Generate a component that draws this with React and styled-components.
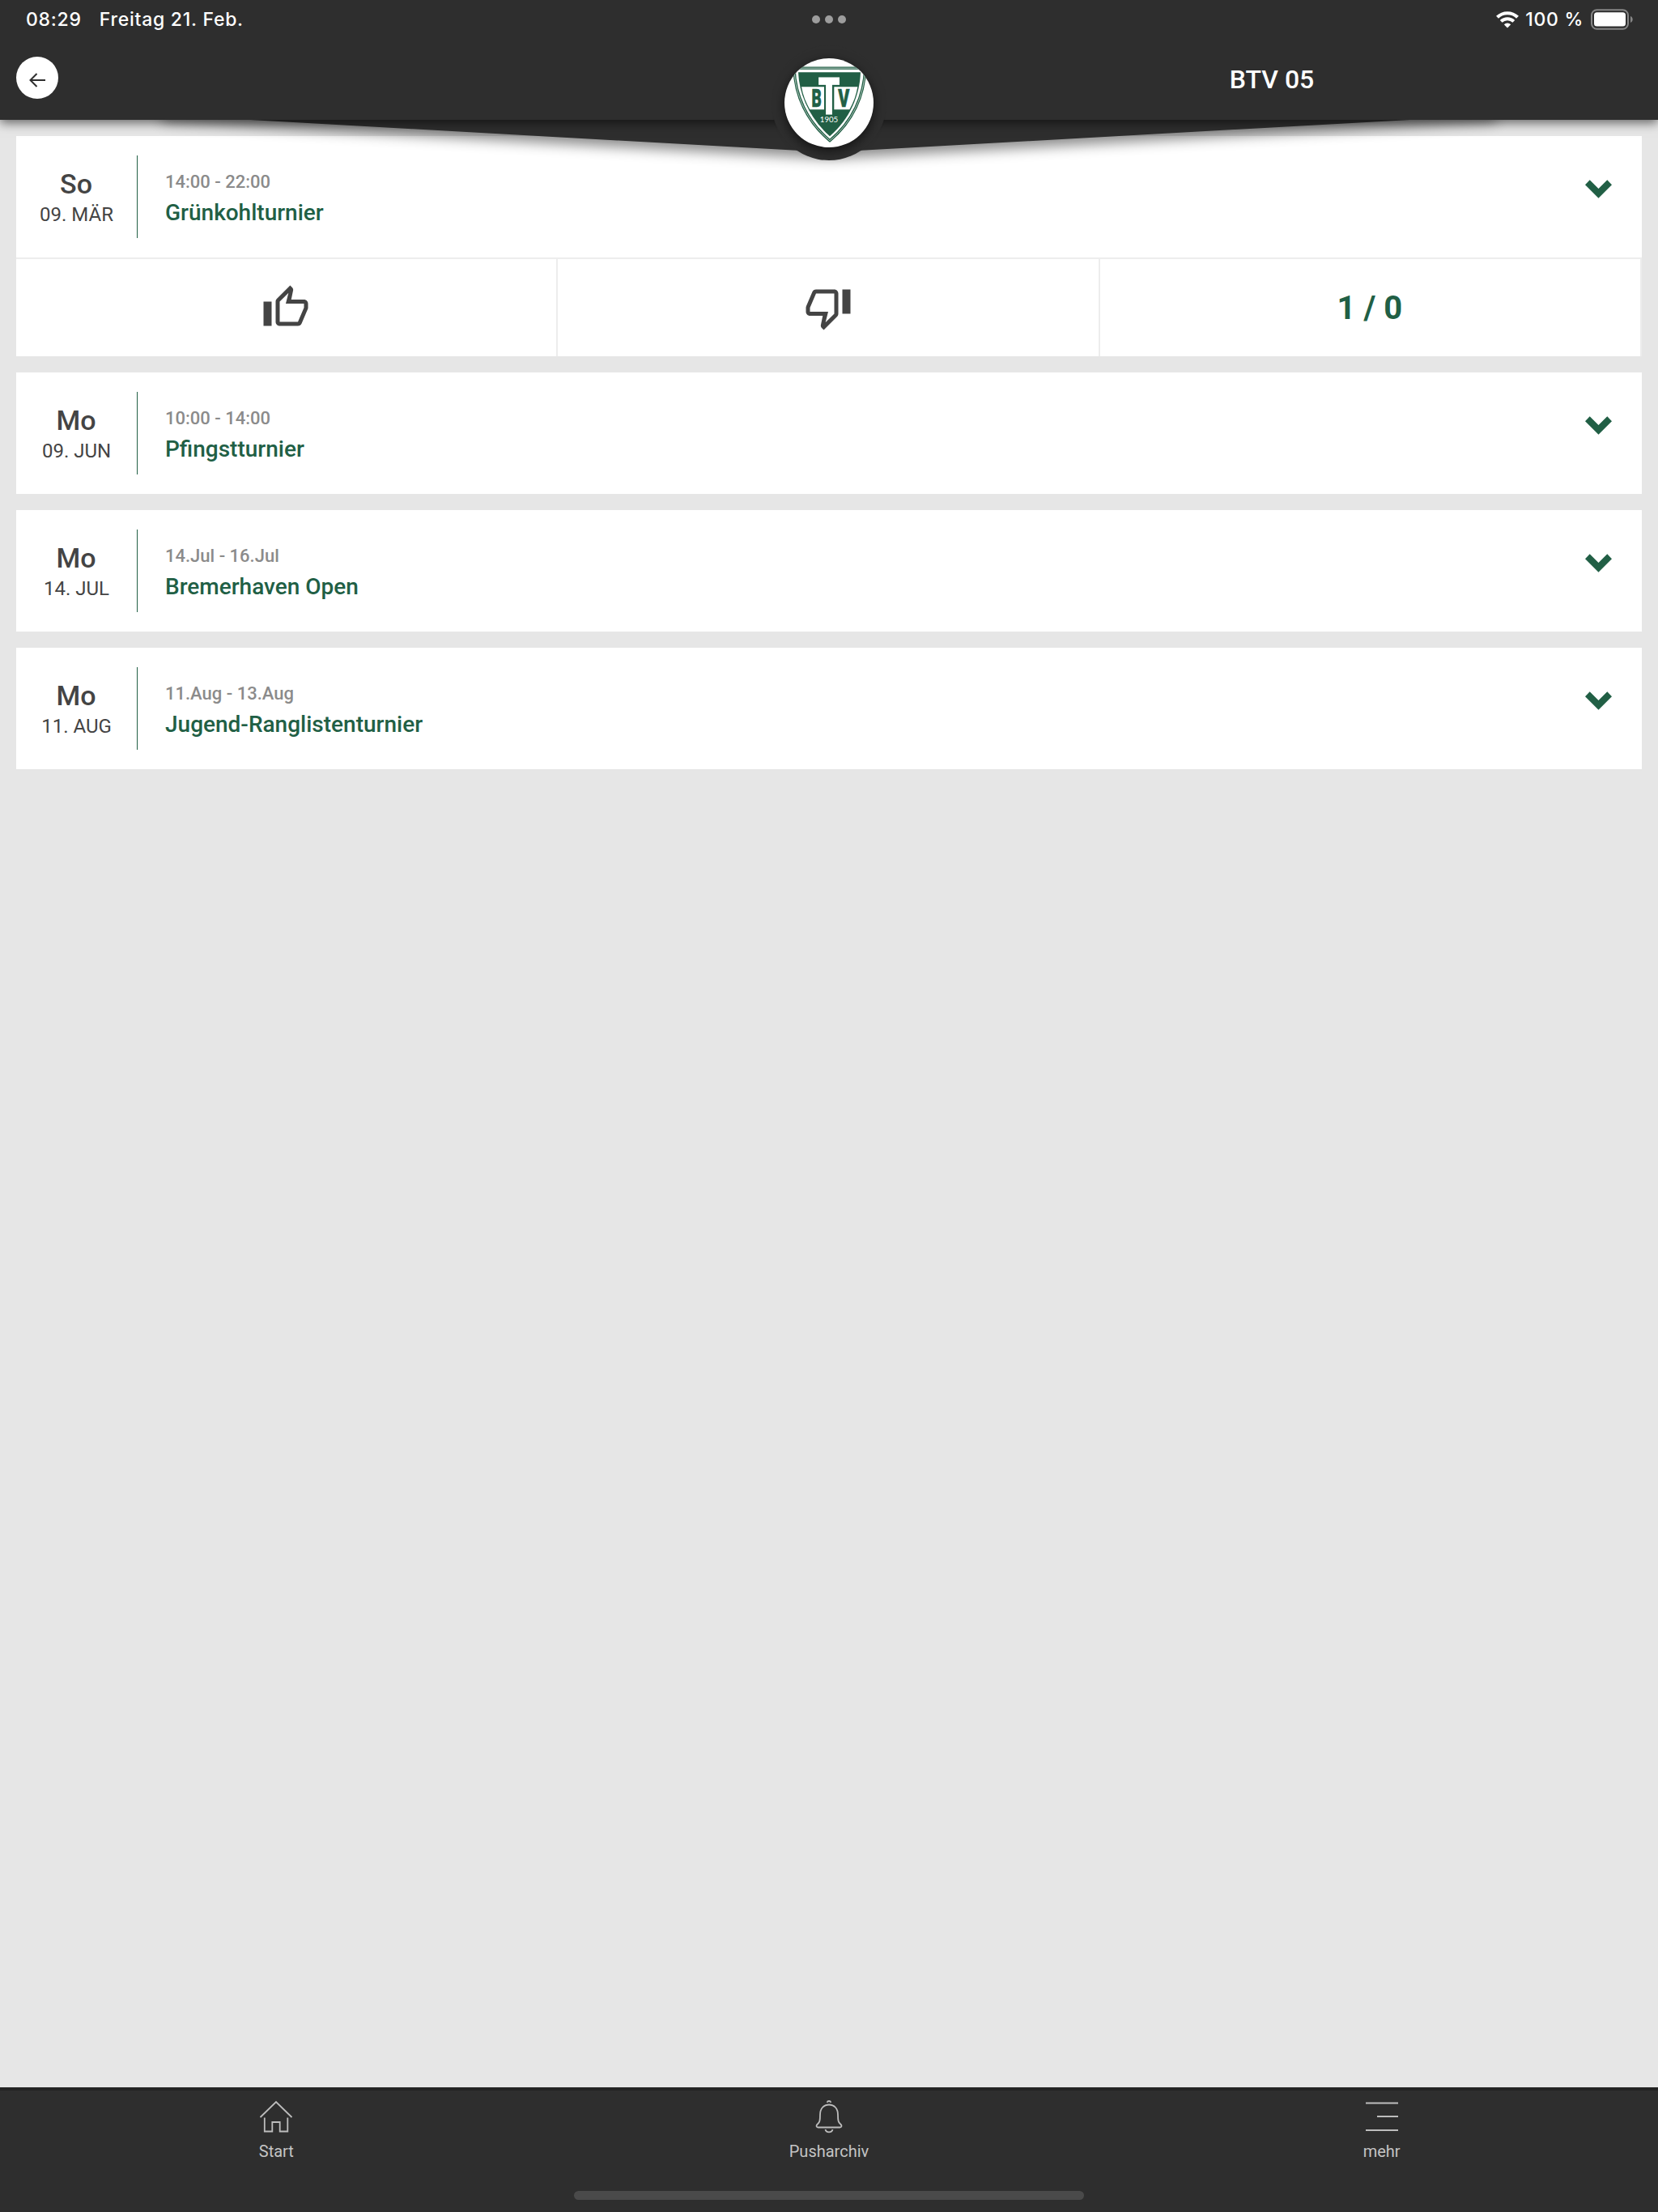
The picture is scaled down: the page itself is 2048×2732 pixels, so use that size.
import React from "react";
import styled, { createGlobalStyle } from "styled-components";
import { MdOutlineThumbUp, MdOutlineThumbDown } from "react-icons/md";

const GlobalStyle = createGlobalStyle`
  * {
    box-sizing: border-box;
  }
  body {
    margin: 0;
    background-color: #e6e6e6;
    font-family: Roboto, "Liberation Sans", sans-serif;
  }
`;

const Page = styled.div`
  width: 2048px;
  height: 2732px;
  display: flex;
  flex-direction: column;
  overflow: hidden;
  background-color: #e6e6e6;
`;

// header
const Header = styled.header`
  position: relative;
  z-index: 2;
  width: 100%;
  height: 148px;
  flex-shrink: 0;
`;

const HeaderBody = styled.div`
  position: relative;
  height: 148px;
  background-color: #2e2e2e;
  box-shadow: 0 4px 12px rgba(0, 0, 0, 0.55);
`;

const StatusBar = styled.div`
  height: 48px;
  padding: 0 30px 0 32px;
  display: grid;
  grid-template-columns: 1fr 42px 1fr;
  align-items: center;
  color: white;
  font-family: Inter, sans-serif;
  font-size: 23px;
  font-weight: 500;
  line-height: 48px;
`;

const StatusLeft = styled.div`
  display: flex;
  gap: 22px;
  letter-spacing: 0.75px;
`;

const StatusRight = styled.div`
  display: flex;
  justify-content: flex-end;
  align-items: center;
`;

const Percent = styled.span`
  margin: 0 9px 0 8px;
  letter-spacing: 0.7px;
`;

const Dots = styled.div`
  display: flex;
  gap: 6px;
  margin-left: -1px;
`;

const Dot = styled.span`
  width: 10px;
  height: 10px;
  border-radius: 50%;
  background-color: #9d9d9d;
`;

const TitleBar = styled.div`
  height: 100px;
  padding: 22px 20px 0;
  display: flex;
  justify-content: space-between;
`;

const BackButton = styled.button`
  width: 52px;
  height: 52px;
  padding: 5px 0 0;
  border: none;
  border-radius: 50%;
  background-color: white;
  display: flex;
  justify-content: center;
  align-items: center;
`;

const Title = styled.h1`
  width: 954px;
  margin: 0 -20px 0 0;
  color: white;
  font-size: 32px;
  font-weight: 500;
  line-height: 57px;
  text-align: center;
`;

const WedgeShadow = styled.div`
  position: absolute;
  top: 130px;
  left: 200px;
  filter: drop-shadow(0 8px 8px rgba(0, 0, 0, 0.45));
`;

const Wedge = styled.div`
  width: 1648px;
  height: 58px;
  background-color: #2e2e2e;
  clip-path: polygon(0 0, 100% 0, 100% 12px, 50% 58px, 0 12px);
`;

const Emblem = styled.div`
  position: absolute;
  top: 56px;
  left: 953px;
  width: 142px;
  height: 142px;
  border-radius: 50%;
  background-color: #2e2e2e;
  display: flex;
  justify-content: center;
  align-items: center;
`;

const EmblemDisc = styled.div`
  width: 110px;
  height: 110px;
  border-radius: 50%;
  overflow: hidden;
  background-color: white;
  box-shadow: 0 4px 14px rgba(0, 0, 0, 0.6);
`;

// events
const List = styled.main`
  flex: 1;
  padding: 20px;
  display: flex;
  flex-direction: column;
  gap: 20px;
`;

const Card = styled.article`
  background-color: white;
`;

const CardHead = styled.div`
  height: 150px;
  padding: 24px 37px 24px 0;
  display: flex;
`;

const DateBox = styled.div`
  width: 150px;
  border-right: 1px solid #215f45;
  color: #444;
  text-align: center;
`;

const Day = styled.div`
  margin-top: 15px;
  padding-right: 1px;
  font-size: 34px;
  font-weight: 500;
  line-height: 40px;
`;

const DateText = styled.div`
  font-size: 24px;
  line-height: 36px;
`;

const Info = styled.div`
  flex: 1;
  padding: 19px 0 0 34px;
  font-weight: 500;
`;

const Time = styled.div`
  color: #8b8b8b;
  font-size: 22px;
  line-height: 28px;
`;

const Name = styled.div`
  margin-top: 4px;
  color: #215f45;
  font-size: 28px;
  line-height: 40px;
`;

const Chevron = styled.svg`
  width: 33px;
  height: 23px;
  margin-top: 30px;
`;

const Votes = styled.div`
  height: 122px;
  display: grid;
  grid-template-columns: repeat(3, 1fr);
  border-top: 2px solid #ededed;
`;

const Vote = styled.div`
  display: flex;
  justify-content: center;
  align-items: center;
  border-right: 2px solid #ededed;
  color: #444;
  font-size: 60px;
  &:first-child {
    padding-right: 1px;
  }
`;

const Count = styled.span`
  padding-right: 1px;
  color: #215f45;
  font-size: 40px;
  font-weight: 700;
`;

// bottom navigation
const Nav = styled.nav`
  height: 154px;
  flex-shrink: 0;
  border-top: 4px solid #232323;
  background-color: #2e2e2e;
`;

const Tabs = styled.div`
  height: 124px;
  display: grid;
  grid-template-columns: repeat(3, 1fr);
`;

const Tab = styled.div`
  padding-top: 10px;
  display: flex;
  flex-direction: column;
  align-items: center;
  color: #c4c4c4;
  font-size: 20px;
  line-height: 24px;
`;

const TabIcon = styled.svg`
  width: 44px;
  height: 44px;
  margin-bottom: 9px;
  fill: none;
  stroke: #bdbdbd;
  stroke-width: 1.8;
`;

const HomeIndicator = styled.div`
  width: 630px;
  height: 11px;
  margin: 0 auto;
  border-radius: 6px;
  background-color: #4a4a4a;
`;

const events = [
  { day: "So", date: "09. MÄR", time: "14:00 - 22:00", name: "Grünkohlturnier", votes: "1 / 0" },
  { day: "Mo", date: "09. JUN", time: "10:00 - 14:00", name: "Pfingstturnier" },
  { day: "Mo", date: "14. JUL", time: "14.Jul - 16.Jul", name: "Bremerhaven Open" },
  { day: "Mo", date: "11. AUG", time: "11.Aug - 13.Aug", name: "Jugend-Ranglistenturnier" },
];

const Wifi = () => (
  <svg width="28" height="21" viewBox="0 0 28 21" fill="none" stroke="white">
    <path d="M1.5 7.3a18 18 0 0 1 25 0" strokeWidth="4.2" />
    <path d="M6.2 12.4a11.3 11.3 0 0 1 15.6 0" strokeWidth="4" />
    <path d="M14 20.5l-4.2-4.3a6 6 0 0 1 8.4 0z" fill="white" stroke="none" />
  </svg>
);

const Battery = () => (
  <svg width="53" height="26" viewBox="0 0 53 26">
    <rect x="1" y="1.2" width="45" height="23.6" rx="6.5" fill="none" stroke="#868686" strokeWidth="2" />
    <rect x="4" y="4.3" width="39" height="17.2" rx="3.5" fill="white" />
    <path d="M49 9v8c1.6-.6 2.7-2.2 2.7-4S50.6 9.6 49 9z" fill="#868686" />
  </svg>
);

const Shield = () => (
  <svg width="110" height="110" viewBox="15 12 330 330">
    <path d="M51 48.5H314C311 150 268 246 183 317C98 246 54 150 51 48.5Z" fill="white" stroke="#215f45" strokeWidth="10" />
    <path d="M51 48.5H314C311 150 268 246 183 317C98 246 54 150 51 48.5Z" fill="none" stroke="white" strokeWidth="2" />
    <path d="M66 64H297C294 150 258 235 183 301C109 235 70 150 66 64Z" fill="#215f45" />
    <path d="M78 118H162V202H109C94 176 83 147 78 118Z" fill="white" />
    <path d="M199 118H286C281 147 271 176 256 202H199Z" fill="white" />
    <g fontFamily="Roboto, sans-serif" fontWeight="900" textAnchor="middle">
      <text fontSize="187" fill="white" stroke="white" strokeWidth="3" transform="translate(180.5 218.5) scale(0.68 1)">
        T
      </text>
      <text fontSize="95" fill="#215f45" stroke="#215f45" strokeWidth="2" transform="translate(134 193) scale(0.6 1)">
        B
      </text>
      <text fontSize="95" fill="#215f45" stroke="#215f45" strokeWidth="2" transform="translate(235 193) scale(0.67 1)">
        V
      </text>
    </g>
    <text x="180" y="248" fontFamily="Lato, sans-serif" fontSize="29" textAnchor="middle" fill="white">
      1905
    </text>
  </svg>
);

const EventCard = ({ event }) => (
  <Card>
    <CardHead>
      <DateBox>
        <Day>{event.day}</Day>
        <DateText>{event.date}</DateText>
      </DateBox>
      <Info>
        <Time>{event.time}</Time>
        <Name>{event.name}</Name>
      </Info>
      <Chevron viewBox="0 0 33 23" fill="#215f45">
        <path d="M0 6.3L5.7 0.3L16.5 11L27.3 0.3L33 6.3L16.5 22.7Z" />
      </Chevron>
    </CardHead>
    {event.votes && (
      <Votes>
        <Vote>
          <MdOutlineThumbUp />
        </Vote>
        <Vote>
          <MdOutlineThumbDown />
        </Vote>
        <Vote>
          <Count>{event.votes}</Count>
        </Vote>
      </Votes>
    )}
  </Card>
);

const App = () => {
  return (
    <Page>
      <GlobalStyle />
      <Header>
        <WedgeShadow>
          <Wedge />
        </WedgeShadow>
        <HeaderBody>
          <StatusBar>
            <StatusLeft>
              <span>08:29</span>
              <span>Freitag 21. Feb.</span>
            </StatusLeft>
            <Dots>
              <Dot />
              <Dot />
              <Dot />
            </Dots>
            <StatusRight>
              <Wifi />
              <Percent>100 %</Percent>
              <Battery />
            </StatusRight>
          </StatusBar>
          <TitleBar>
            <BackButton>
              <svg width="20" height="18" viewBox="0 0 20 18" fill="none" stroke="#2e2e2e" strokeWidth="2">
                <path d="M20 9H1.5M9.5 1L1.5 9l8 8" />
              </svg>
            </BackButton>
            <Title>BTV 05</Title>
          </TitleBar>
        </HeaderBody>
        <Emblem>
          <EmblemDisc>
            <Shield />
          </EmblemDisc>
        </Emblem>
      </Header>
      <List>
        {events.map((event) => (
          <EventCard key={event.name} event={event} />
        ))}
      </List>
      <Nav>
        <Tabs>
          <Tab>
            <TabIcon viewBox="0 0 44 44">
              <path d="M2.5 23L22 4L41.5 23M7.8 23.5V40.5H17.3V29H26.7V40.5H36.3V23.5" />
            </TabIcon>
            Start
          </Tab>
          <Tab>
            <TabIcon viewBox="0 0 44 44">
              <path d="M11 20C11 12 15.5 7.5 22 7.5S33 12 33 20C33 27 33.5 29 36 31.2C38.5 33.3 37.5 35.5 35.5 35.5H8.5C6.5 35.5 5.5 33.3 8 31.2C10.5 29 11 27 11 20ZM19.6 4.8C20.3 2.4 23.7 2.4 24.4 4.8M17.5 38C18.5 42.5 25.5 42.5 26.5 38" />
            </TabIcon>
            Pusharchiv
          </Tab>
          <Tab>
            <TabIcon viewBox="0 0 44 44">
              <path d="M2 5.5H42M16 22H42M2 39H42" />
            </TabIcon>
            mehr
          </Tab>
        </Tabs>
        <HomeIndicator />
      </Nav>
    </Page>
  );
};

export default App;
